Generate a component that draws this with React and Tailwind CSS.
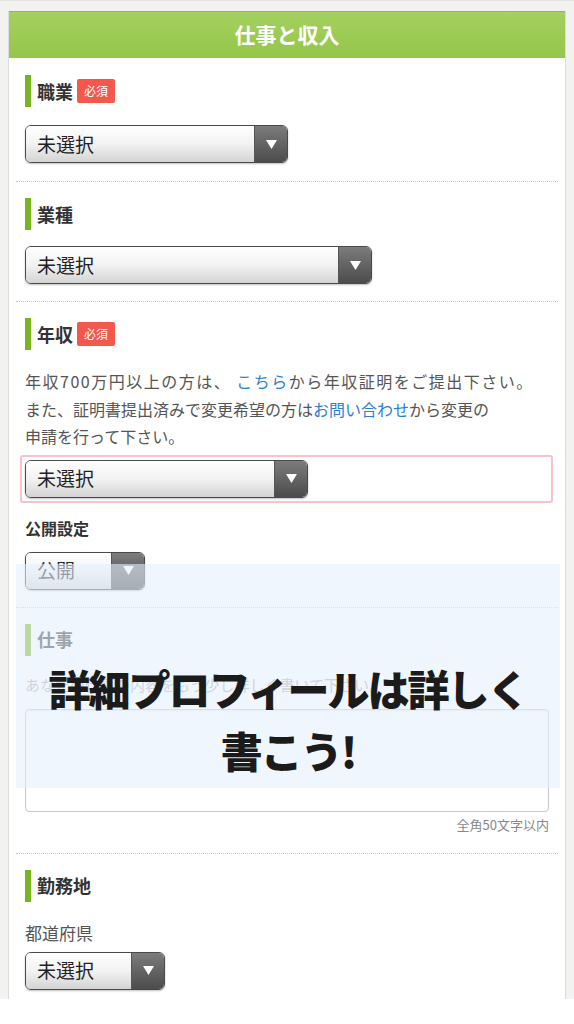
const jp = { fontFamily: '"Noto Sans CJK JP", "Noto Sans", sans-serif' };

function Arrow() {
  return (
    <svg width="11" height="9" viewBox="0 0 11 9">
      <polygon points="0,0 11,0 5.5,9" fill="#ffffff" />
    </svg>
  );
}

function SelectBox({ width, value = "未選択", muted = false }) {
  return (
    <div
      className="flex h-[38px] overflow-hidden rounded-[6px] border border-[#4a4a4a] shadow-[0_1px_2px_rgba(0,0,0,0.25)]"
      style={{ width }}
    >
      <div
        className={`flex flex-1 items-center bg-gradient-to-b from-white via-[#f2f2f2] to-[#d4d4d4] pl-[11px] text-[19px] ${
          muted ? "text-[#666]" : "text-[#222]"
        }`}
      >
        {value}
      </div>
      <div className="flex w-[33px] items-center justify-center border-l border-[#555] bg-gradient-to-b from-[#7c7c7c] to-[#4c4c4c]">
        <Arrow />
      </div>
    </div>
  );
}

function Heading({ label, required }) {
  return (
    <div className="flex h-[32px] items-center">
      <span className="h-full w-[6px] bg-[#78b41f]" />
      <span className="ml-[6px] text-[18px] font-bold text-[#333]">{label}</span>
      {required && (
        <span className="ml-[4px] flex h-[24px] w-[38px] items-center justify-center rounded-[2px] bg-[#f4574b] text-[12px] text-white">
          必須
        </span>
      )}
    </div>
  );
}

function Section({ children, className = "", last = false }) {
  return (
    <div
      className={`mx-[7px] px-[9px] ${last ? "" : "border-b border-dotted border-[#c8c8c8]"} ${className}`}
    >
      {children}
    </div>
  );
}

export default function App() {
  return (
    <div className="min-h-screen bg-white" style={jp}>
      <div className="border-t border-[#e4e4e2] bg-[#f2f2f0] px-[8px] pt-[10px]">
        <div className="relative border-x border-[#dcdcdc] bg-white">
          <div className="flex h-[47px] items-center justify-center border-t border-[#8cbc48] bg-gradient-to-b from-[#a4d15f] to-[#95c54a] text-[21px] font-bold text-white">
            仕事と収入
          </div>

          <Section className="pt-[17px] pb-[18px]">
            <Heading label="職業" required />
            <div className="mt-[18px]">
              <SelectBox width={263} />
            </div>
          </Section>

          <Section className="pt-[16px] pb-[17px]">
            <Heading label="業種" />
            <div className="mt-[16px]">
              <SelectBox width={347} />
            </div>
          </Section>

          <Section className="pt-[16px] pb-[17px]">
            <Heading label="年収" required />
            <div className="mt-[18px] text-[16px] leading-[27.5px] text-[#555]">
              <div className="tracking-[1.5px]">
                年収700万円以上の方は、{" "}
                <span className="text-[#2d7fd3]">こちら</span>
                から年収証明をご提出下さい。
              </div>
              <div>
                また、証明書提出済みで変更希望の方は
                <span className="text-[#2d7fd3]">お問い合わせ</span>
                から変更の
              </div>
              <div>申請を行って下さい。</div>
            </div>
            <div className="mt-[4px] ml-[-5px] mr-[-4px] rounded-[3px] border-2 border-[#f7c3c6] px-[3px] py-[3px]">
              <SelectBox width={283} />
            </div>
            <div className="mt-[13px] text-[16px] font-bold leading-[24px] text-[#333]">公開設定</div>
            <div className="mt-[12px]">
              <SelectBox width={120} value="公開" />
            </div>
          </Section>

          <Section className="pt-[16px] pb-[19px]">
            <Heading label="仕事" />
            <div className="mt-[17px] text-[15px] leading-[24px] text-[#aaa]">
              あなたの仕事の内容をもう少し詳しく書いて下さい。
            </div>
            <div className="mt-[12px] h-[103px] rounded-[4px] border border-[#c9c9c9] shadow-[inset_0_1px_2px_rgba(0,0,0,0.08)]" />
            <div className="mt-[4px] text-right text-[13px] leading-[18px] text-[#888]">全角50文字以内</div>
          </Section>

          <Section className="pt-[16px] pb-[9px]" last>
            <Heading label="勤務地" />
            <div className="mt-[19px] text-[17px] leading-[24px] text-[#555]">都道府県</div>
            <div className="mt-[7px]">
              <SelectBox width={140} />
            </div>
          </Section>

          {/* caption band laid over the work section */}
          <div className="absolute left-[7px] top-[553px] h-[224px] w-[544px] bg-[rgba(230,240,252,0.6)]">
            <div className="flex flex-col items-center pt-[93px] text-[42px] font-black leading-[62px] tracking-[-2px] text-[#1b1b1b]">
              <span>詳細プロフィールは詳しく</span>
              <span>書こう!</span>
            </div>
          </div>
        </div>
      </div>
    </div>
  );
}
